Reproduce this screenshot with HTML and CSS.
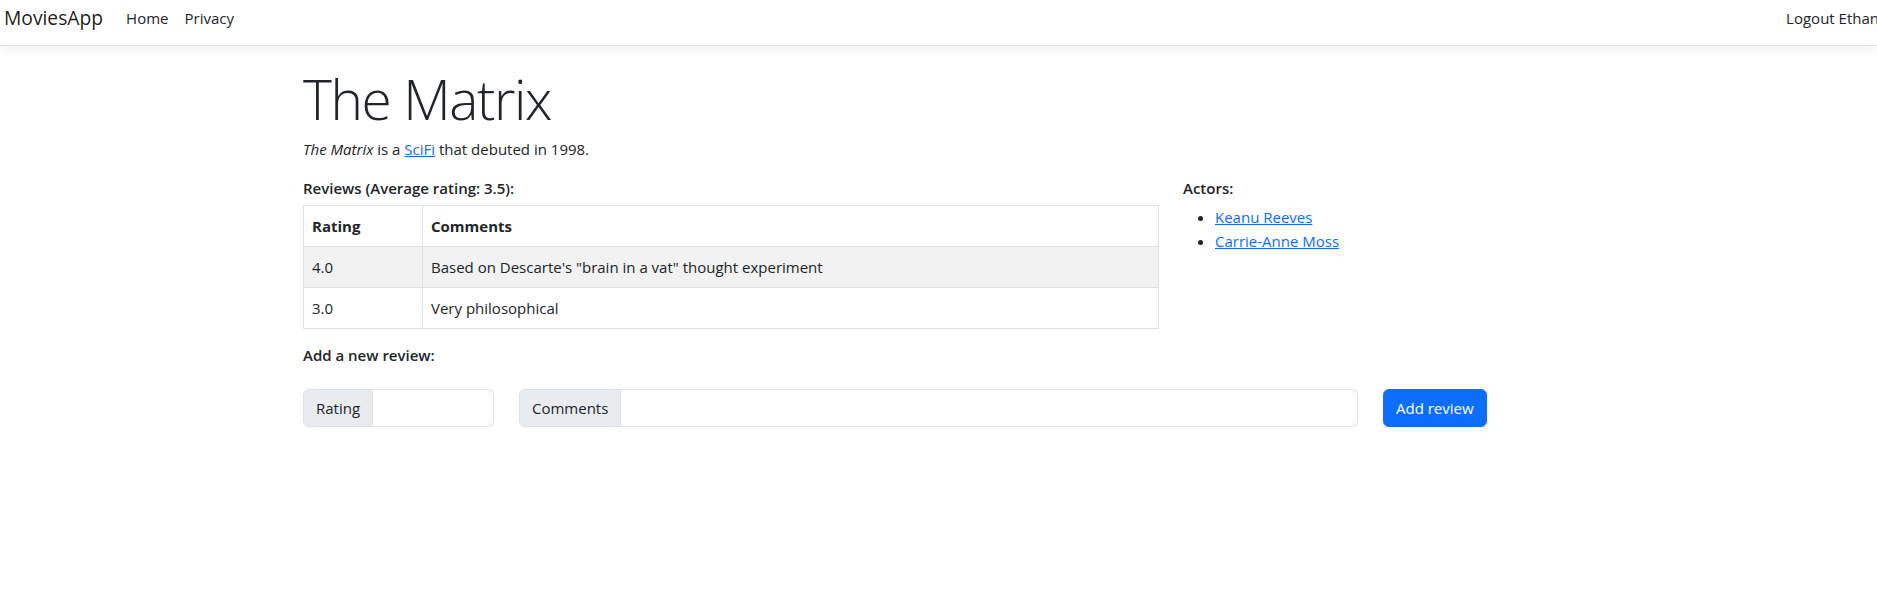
FILE: index.html
```html
<!DOCTYPE html>
<html lang="en">
<head>
<meta charset="utf-8">
<title>The Matrix - MoviesApp</title>
<link rel="stylesheet" href="styles.css">
</head>
<body>
<header class="navbar">
  <a class="brand" href="#">MoviesApp</a>
  <nav class="nav-links">
    <a class="nav-link" href="#">Home</a>
    <a class="nav-link" href="#">Privacy</a>
  </nav>
  <div class="nav-user">
    <a class="nav-link" href="#">Logout Ethan</a>
  </div>
</header>

<main class="container">
  <h1 class="title">The Matrix</h1>
  <p class="summary"><em>The Matrix</em> is a <a href="#">SciFi</a> that debuted in 1998.</p>

  <div class="content-row">
    <section class="reviews">
      <div class="label">Reviews (Average rating: 3.5):</div>
      <table class="review-table">
        <thead>
          <tr><th class="col-rating">Rating</th><th>Comments</th></tr>
        </thead>
        <tbody>
          <tr class="striped"><td>4.0</td><td>Based on Descarte's "brain in a vat" thought experiment</td></tr>
          <tr><td>3.0</td><td>Very philosophical</td></tr>
        </tbody>
      </table>
      <div class="label label-add">Add a new review:</div>
    </section>

    <aside class="actors">
      <div class="label">Actors:</div>
      <ul class="actor-list">
        <li><a href="#">Keanu Reeves</a></li>
        <li><a href="#">Carrie-Anne Moss</a></li>
      </ul>
    </aside>
  </div>

  <form class="review-form">
    <div class="input-group group-rating">
      <span class="addon">Rating</span>
      <input class="field" type="text">
    </div>
    <div class="input-group group-comments">
      <span class="addon">Comments</span>
      <input class="field" type="text">
    </div>
    <button class="btn-primary" type="button">Add review</button>
  </form>
</main>
</body>
</html>
```

FILE: styles.css
```css
html, body {
  margin: 0;
  padding: 0;
  overflow-x: hidden;
}

body {
  font-family: "Open Sans", "Noto Sans", "Liberation Sans", sans-serif;
  font-size: 15px;
  line-height: 24px;
  color: #212529;
  background: #fff;
}

a {
  color: #0d6efd;
}

/* ---------- navbar ---------- */
.navbar {
  display: flex;
  align-items: center;
  box-sizing: border-box;
  height: 46px;
  padding: 0 0 9px 4px;
  border-bottom: 1px solid #dee2e6;
  box-shadow: 0 4px 12px rgba(0, 0, 0, 0.05);
  background: #fff;
}

.brand {
  font-size: 19.25px;
  line-height: 30px;
  color: rgba(0, 0, 0, 0.9);
  text-decoration: none;
  margin-right: 15px;
}

.nav-links {
  display: flex;
}

.nav-link {
  display: block;
  padding: 0 8px;
  color: #212529;
  text-decoration: none;
}

.nav-user {
  margin-left: auto;
  margin-right: -10px;
  white-space: nowrap;
}

/* ---------- main ---------- */
.container {
  margin-left: 303px;
  width: 1296px;
  padding-top: 21px;
}

.title {
  margin: 0 0 7px;
  font-size: 55px;
  line-height: 63px;
  font-weight: 300;
  letter-spacing: -1.4px;
}

.summary {
  margin: 0 0 15px;
}

.content-row {
  display: grid;
  grid-template-columns: 856px 1fr;
  column-gap: 24px;
}

.label {
  font-weight: 600;
  margin-bottom: 5px;
}

.review-table {
  width: 856px;
  border-collapse: collapse;
  margin-bottom: 14px;
}

.review-table th,
.review-table td {
  border: 1px solid #dee2e6;
  padding: 8px;
  text-align: left;
  vertical-align: top;
}

.review-table th {
  font-weight: 700;
}

.col-rating {
  width: 102px;
}

.review-table tr.striped td {
  background: #f2f2f2;
}

.label-add {
  margin-bottom: 0;
}

.actor-list {
  margin: 0;
  padding-left: 32px;
}

/* ---------- form ---------- */
.review-form {
  display: flex;
  align-items: stretch;
  gap: 25px;
  margin-top: 22px;
}

.input-group {
  display: flex;
  height: 38px;
  box-sizing: border-box;
}

.group-rating {
  width: 191px;
}

.group-comments {
  width: 839px;
}

.addon {
  display: flex;
  align-items: center;
  padding: 0 12px;
  background: #e9ecef;
  border: 1px solid #dee2e6;
  border-radius: 6px 0 0 6px;
  white-space: nowrap;
}

.field {
  flex: 1;
  min-width: 0;
  margin: 0;
  border: 1px solid #dee2e6;
  border-left: 0;
  border-radius: 0 6px 6px 0;
  padding: 6px 12px;
  font: inherit;
  background: #fff;
}

.btn-primary {
  height: 38px;
  padding: 0 12px;
  border: 1px solid #0d6efd;
  border-radius: 6px;
  background: #0d6efd;
  color: #fff;
  font: inherit;
  line-height: 24px;
  cursor: pointer;
}
```
